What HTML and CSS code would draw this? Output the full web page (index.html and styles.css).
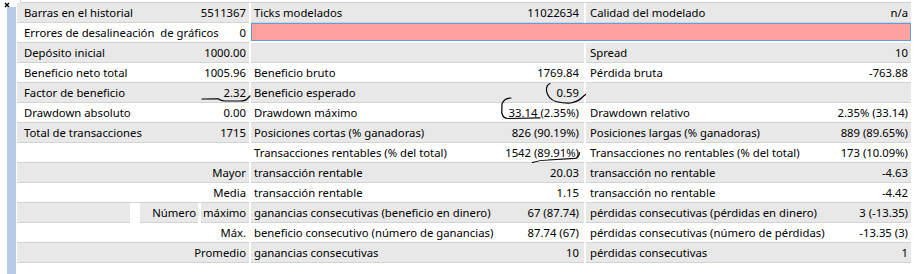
FILE: index.html
```html
<!DOCTYPE html>
<html lang="es">
<head>
<meta charset="utf-8">
<title>Resultados</title>
<link rel="stylesheet" href="styles.css">
</head>
<body>
<div class="page">
  <div class="side">
    <svg class="close" width="6" height="6" viewBox="0 0 6 6"><path d="M1 1 L5 5 M5 1 L1 5" stroke="#000" stroke-width="1.4"/></svg>
    <div class="bar"></div>
  </div>
  <div class="panel">
    <div class="tabline"></div>

    <div class="row g">
      <div class="cell"><span>Barras en el historial</span><span>5511367</span></div>
      <div class="cell c2"><span>Ticks modelados</span><span>11022634</span></div>
      <div class="cell c3"><span>Calidad del modelado</span><span>n/a</span></div>
    </div>

    <div class="row">
      <div class="cell"><span>Errores de desalineación&nbsp; de gráficos</span><span>0</span></div>
      <div class="alert"></div>
    </div>

    <div class="row g">
      <div class="cell"><span>Depósito inicial</span><span>1000.00</span></div>
      <div class="cell c2"></div>
      <div class="cell c3"><span>Spread</span><span>10</span></div>
    </div>

    <div class="row">
      <div class="cell"><span>Beneficio neto total</span><span>1005.96</span></div>
      <div class="cell c2"><span>Beneficio bruto</span><span>1769.84</span></div>
      <div class="cell c3"><span>Pérdida bruta</span><span>-763.88</span></div>
    </div>

    <div class="row g">
      <div class="cell"><span>Factor de beneficio</span><span>2.32</span></div>
      <div class="cell c2"><span>Beneficio esperado</span><span>0.59</span></div>
      <div class="cell c3"></div>
    </div>

    <div class="row">
      <div class="cell"><span>Drawdown absoluto</span><span>0.00</span></div>
      <div class="cell c2"><span>Drawdown máximo</span><span>33.14 (2.35%)</span></div>
      <div class="cell c3"><span>Drawdown relativo</span><span>2.35% (33.14)</span></div>
    </div>

    <div class="row g">
      <div class="cell"><span>Total de transacciones</span><span>1715</span></div>
      <div class="cell c2"><span>Posiciones cortas (% ganadoras)</span><span>826 (90.19%)</span></div>
      <div class="cell c3"><span>Posiciones largas (% ganadoras)</span><span>889 (89.65%)</span></div>
    </div>

    <div class="row">
      <div class="cell"></div>
      <div class="cell c2"><span>Transacciones rentables (% del total)</span><span>1542 (89.91%)</span></div>
      <div class="cell c3"><span>Transacciones no rentables (% del total)</span><span>173 (10.09%)</span></div>
    </div>

    <div class="row g">
      <div class="cell end"><span>Mayor</span></div>
      <div class="cell c2"><span>transacción rentable</span><span>20.03</span></div>
      <div class="cell c3"><span>transacción no rentable</span><span>-4.63</span></div>
    </div>

    <div class="row">
      <div class="cell end"><span>Media</span></div>
      <div class="cell c2"><span>transacción rentable</span><span>1.15</span></div>
      <div class="cell c3"><span>transacción no rentable</span><span>-4.42</span></div>
    </div>

    <div class="row g">
      <div class="split">
        <div class="cell sub s1"></div>
        <div class="cell sub s2 end"><span>Número</span></div>
        <div class="cell sub s3"><span>máximo</span></div>
      </div>
      <div class="cell c2"><span>ganancias consecutivas (beneficio en dinero)</span><span>67 (87.74)</span></div>
      <div class="cell c3"><span>pérdidas consecutivas (pérdidas en dinero)</span><span>3 (-13.35)</span></div>
    </div>

    <div class="row">
      <div class="cell end"><span>Máx.</span></div>
      <div class="cell c2"><span>beneficio consecutivo (número de ganancias)</span><span>87.74 (67)</span></div>
      <div class="cell c3"><span>pérdidas consecutivas (número de pérdidas)</span><span>-13.35 (3)</span></div>
    </div>

    <div class="row g">
      <div class="cell end"><span>Promedio</span></div>
      <div class="cell c2"><span>ganancias consecutivas</span><span>10</span></div>
      <div class="cell c3"><span>pérdidas consecutivas</span><span>1</span></div>
    </div>
  </div>

  <svg class="ink" width="918" height="274" viewBox="0 0 918 274">
    <g fill="none" stroke="#000" stroke-width="1.2" stroke-linecap="round" stroke-linejoin="round">
      <path d="M202 99 L218 98.8 Q221 101 225 101 L240 101 Q245 101 247 99 L250 96"/>
      <path d="M550 83.5 Q546 85 546.5 91 Q548 99 556 101.5 Q564 103.5 571 103 Q579 101 582 97.5 L585.5 94.5"/>
      <path d="M511 98 Q504 98 502 104 L501.8 113 Q503 118.5 508 118.5 L540 117.8"/>
      <path d="M532.5 162.5 Q540 160 548 160 L575 158.4 Q579 158 579.5 152.5"/>
    </g>
  </svg>
</div>
</body>
</html>
```

FILE: styles.css
```css
* { box-sizing: border-box; }

html, body {
  margin: 0;
  padding: 0;
  background: #ffffff;
}

body {
  width: 918px;
  height: 274px;
  overflow: hidden;
  font-family: "Noto Sans", "Open Sans", sans-serif;
  font-size: 11.3px;
  color: #000000;
}

.page {
  position: relative;
  display: flex;
  width: 918px;
  height: 274px;
}

.side {
  width: 17px;
  display: flex;
  flex-direction: column;
  flex: none;
}

.close {
  display: block;
  margin: 2px 0 0 4px;
  flex: none;
}

.bar {
  flex: 1;
  width: 9px;
  margin-left: 7px;
  margin-top: -1px;
  background: #b6cbe6;
}

.panel {
  width: 894px;
  display: flex;
  flex-direction: column;
  flex: none;
}

.tabline {
  height: 3px;
  margin-left: 3px;
  border-left: 1px solid #cfcfcf;
  border-bottom: 1px solid #cfcfcf;
}

.row {
  display: grid;
  grid-template-columns: 232px 333px 325px;
  column-gap: 2px;
  height: 20px;
}

.cell {
  display: flex;
  justify-content: space-between;
  align-items: center;
  height: 20px;
  padding: 0 3px 0 7px;
  border-bottom: 1px solid #d3d3d3;
  white-space: nowrap;
  line-height: 19px;
}

.cell.end {
  justify-content: flex-end;
}

.g .cell {
  background: #e8e8e8;
}

.c2 {
  padding: 0 5px 0 3px;
}

.c3 {
  padding: 0 3px 0 4px;
}

.alert {
  grid-column: 2 / 4;
  height: 18px;
  margin-top: 0;
  background: #ffa1a1;
  border: 1px solid #5e9fdf;
}

.split {
  display: flex;
  column-gap: 0;
}

.sub.s1 {
  width: 113px;
  margin-right: 10px;
}

.sub.s2 {
  width: 58px;
  margin-right: 3px;
  padding: 0 2px 0 2px;
}

.sub.s3 {
  width: 48px;
  padding: 0 2px 0 2px;
}

.ink {
  position: absolute;
  left: 0;
  top: 0;
  pointer-events: none;
}
```
